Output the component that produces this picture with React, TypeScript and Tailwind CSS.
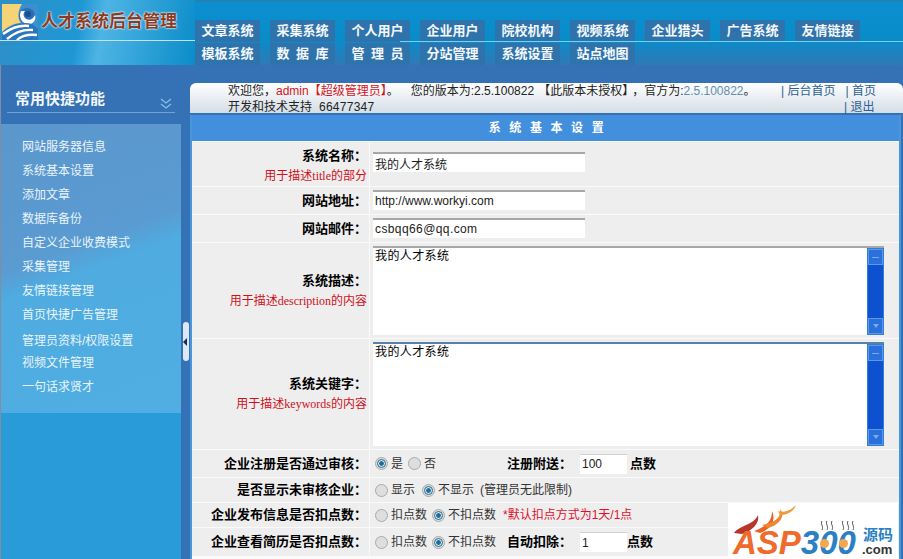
import React from 'react';

const CJK = 'font-["Liberation_Sans","Noto_Sans_CJK_SC",sans-serif]';

const TOP_MENU = [
  '文章系统', '采集系统', '个人用户', '企业用户', '院校机构', '视频系统', '企业猎头', '广告系统', '友情链接',
  '模板系统', '数 据 库', '管 理 员', '分站管理', '系统设置', '站点地图',
];

const SIDE_MENU = [
  { name: '网站服务器信息', h: 'h-[24px]' },
  { name: '系统基本设置', h: 'h-[24px]' },
  { name: '添加文章', h: 'h-[24px]' },
  { name: '数据库备份', h: 'h-[24px]' },
  { name: '自定义企业收费模式', h: 'h-[24px]' },
  { name: '采集管理', h: 'h-[24px]' },
  { name: '友情链接管理', h: 'h-[24px]' },
  { name: '首页快捷广告管理', h: 'h-[26px]' },
  { name: '管理员资料/权限设置', h: 'h-[22px]' },
  { name: '视频文件管理', h: 'h-[24px]' },
  { name: '一句话求贤才', h: 'h-[24px]' },
];

function Logo() {
  return (
    <svg width="36" height="36" viewBox="0 0 36 36" className="block">
      <rect width="36" height="36" fill="#3c8fce" />
      <path d="M0 0H20C16 6 15 14 19 19C12 19 5 23 0 28Z" fill="#f5d477" />
      <circle cx="25" cy="12" r="8" fill="#2a6fb5" />
      <path d="M19 7C16 13 20 21 28 20C33 19 34 14 33 11C31 16 26 17 23 14C21 12 21 9 23 7Z" fill="#fff" />
      <circle cx="26" cy="10" r="3" fill="#17508f" />
      <path d="M0 29C8 21 20 17 30 20L36 25V36H0Z" fill="#2a76bc" />
      <path d="M1 30C9 24 18 21 27 22M5 35C12 29 20 25 31 26M15 36C19 32 25 30 35 31" fill="none" stroke="#fff" strokeWidth="2.4" />
    </svg>
  );
}

function Radio({ on }: { on?: boolean }) {
  return (
    <span className="inline-flex h-[13px] w-[13px] shrink-0 items-center justify-center rounded-full border border-[#a9a9a9] bg-[#dedede]">
      {on && <span className="h-[7px] w-[7px] rounded-full border border-white bg-[#1f6e96] outline-1 outline-[#1f6e96]" />}
    </span>
  );
}

function Choice({ on, text, className }: { on?: boolean; text: string; className: string }) {
  return (
    <span className={`flex items-center gap-[3px] ${className}`}>
      <Radio on={on} />
      <span>{text}</span>
    </span>
  );
}

function Row({ height, label, hint, labelClass, children }: { height: string; label: string; hint?: React.ReactNode; labelClass?: string; children: React.ReactNode }) {
  return (
    <div className={`grid grid-cols-[177px_1fr] gap-x-px ${height}`}>
      <div className={`flex flex-col items-end justify-center bg-[#eeeeee] pr-[2px] ${labelClass ?? ''}`}>
        <div className="text-[13px] leading-[18px] font-bold text-black">{label}</div>
        {hint && <div className="mt-[2px] text-[12px] leading-[18px] text-[#d0101c]">{hint}</div>}
      </div>
      <div className="flex items-center bg-[#eeeeee] text-[12px] text-[#333]">{children}</div>
    </div>
  );
}

function TextField({ value, className }: { value: string; className: string }) {
  return (
    <input
      readOnly
      value={value}
      className={`h-[20px] bg-white pl-[2px] text-[12px] text-[#222] outline-none ${className}`}
    />
  );
}

function ScrollArea({ height, topBorder }: { height: string; topBorder: string }) {
  return (
    <div className={`ml-[3px] flex w-[511px] border-t-2 bg-white ${height} ${topBorder}`}>
      <textarea
        readOnly
        value="我的人才系统"
        className="min-w-0 flex-1 resize-none bg-white pl-[2px] text-[12px] leading-[16px] tracking-[0.4px] text-black outline-none"
      />
      <div className="flex w-[17px] flex-col justify-between border border-[#2f7fd6] bg-[#0d50d0]">
        <div className="flex h-[16px] items-center justify-center border border-[#5f97e4] bg-[#2a70dc]">
          <span className="h-px w-[7px] bg-[#7fa9e6]" />
        </div>
        <div className="flex h-[16px] items-center justify-center border border-[#5f97e4] bg-[#2a70dc]">
          <span className="h-0 w-0 border-x-[3px] border-t-[4px] border-x-transparent border-t-[#7fa9e6]" />
        </div>
      </div>
    </div>
  );
}

function Watermark() {
  return (
    <div className="absolute bottom-0 left-[728px] h-[56px] w-[170px] overflow-hidden bg-white">
      <svg width="70" height="32" viewBox="0 0 70 32" className="absolute left-[4px] top-0">
        <path d="M2 30C8 22 22 22 26 12C28 20 20 28 10 31Z" fill="#b8352a" />
        <path d="M22 28C32 24 40 20 40 8C44 16 40 26 28 30Z" fill="#e8632a" />
        <path d="M30 22C40 20 50 16 48 6C54 12 48 22 36 25Z" fill="#f0862f" />
        <path d="M46 8C52 10 58 8 64 2C62 8 56 12 48 12Z" fill="#f09a3c" />
      </svg>
      <svg width="44" height="12" viewBox="0 0 44 12" fill="none" stroke="#555" strokeWidth="1" className="absolute left-[90px] top-[17px]">
        <path d="M4 1C2 4 6 6 4 10M9 1C7 4 11 6 9 10M14 1C12 4 16 6 14 10M25 1C23 4 27 6 25 10M30 1C28 4 32 6 30 10M35 1C33 4 37 6 35 10" />
      </svg>
      <div className="absolute left-[5px] top-[24px] font-['Liberation_Sans',sans-serif] text-[33px] leading-[31px] font-bold italic whitespace-nowrap">
        <span className="text-[#ef6a2b]">ASP</span>
        <span className="text-[#2b7fc4]">300</span>
      </div>
      <span className="absolute left-[92px] top-[36px] h-[9px] w-[9px] rounded-full bg-[#f2a850]" />
      <span className="absolute left-[111px] top-[36px] h-[9px] w-[9px] rounded-full bg-[#f2a850]" />
      <div className="absolute left-[135px] top-[24px] text-[15px] leading-[16px] font-bold text-[#2b7fc4]">源码</div>
      <div className="absolute left-[134px] top-[40px] font-['Liberation_Sans',sans-serif] text-[13px] leading-[14px] font-bold text-[#333]">.com</div>
    </div>
  );
}

export default function App() {
  return (
    <div className={`relative flex h-[559px] w-[903px] flex-col overflow-hidden bg-[#3472b5] ${CJK}`}>
      {/* Header */}
      <div className="flex h-[65px] shrink-0 bg-[linear-gradient(180deg,#2a7fa8_0px,#0b8fd0_3px,#0a8cc9_40px,#3078b6_65px)]">
        <div className="flex h-[65px] w-[195px] shrink-0 flex-col bg-[linear-gradient(100deg,#2f8fc8_0%,#1f97d4_40%,#4eb4e4_52%,#0a8cc9_100%)]">
          <div className="flex h-[41px] items-center gap-[3px] border-b border-[#bfe6f7] pt-[3px] pl-[2px]">
            <Logo />
            <span className="text-[17px] leading-[22px] font-bold whitespace-nowrap text-[#8a3b25] [text-shadow:0_0_2px_#fff,0_0_2px_#fff]">人才系统后台管理</span>
          </div>
        </div>
        <div className="relative">
          <div className="grid grid-cols-[repeat(9,65px)] gap-x-[10px] gap-y-[1px] pt-[20px]">
            {TOP_MENU.map(name => (
              <div
                key={name}
                className="flex h-[22px] items-center justify-center whitespace-pre bg-[#2f73ad] text-[13px] font-bold text-[#f4f8fb] [word-spacing:3px]"
              >
                {name}
              </div>
            ))}
          </div>
          <div className="absolute left-[205px] top-[41px] h-px w-[503px] bg-[#6fd4f2]" />
        </div>
      </div>

      <div className="flex min-h-0 flex-1">
        {/* Sidebar */}
        <div className="flex w-[181px] shrink-0 flex-col border-l border-[#7f8f9f]">
          <div className="mx-[6px] mt-[17px] flex h-[31px] justify-between border-b border-[#6fa3d6] pr-[3px] pl-[8px]">
            <span className="text-[15px] leading-[34px] font-bold text-[#f2f7fb]">常用快捷功能</span>
            <svg width="12" height="12" viewBox="0 0 12 12" fill="none" stroke="#8fc0ea" strokeWidth="1.2" className="mt-[15px]">
              <path d="M1 2L6 6L11 2M1 7L6 11L11 7" />
            </svg>
          </div>
          <div className="mt-[11px] flex h-[289px] flex-col bg-[linear-gradient(160deg,#5b97cd_0%,#5a9bd1_42%,#4fabe0_50%,#50aee2_100%)] pt-[11px] pl-[21px]">
            {SIDE_MENU.map(item => (
              <div key={item.name} className={`${item.h} text-[12px] leading-[24px] text-[#eaf4fb]`}>{item.name}</div>
            ))}
          </div>
          <div className="flex-1 bg-[#2a9bd9]" />
        </div>

        {/* Splitter */}
        <div className="relative w-[9px] shrink-0">
          <div className="absolute top-[257px] left-[2px] flex h-[39px] w-[6px] items-center rounded-[3px] bg-[#dce9f5]">
            <span className="h-0 w-0 border-y-[4px] border-r-[4px] border-y-transparent border-r-[#14305e]" />
          </div>
        </div>

        {/* Main */}
        <div className="flex min-w-0 flex-1 flex-col pt-[18px]">
          <div className="flex h-[30px] shrink-0 rounded-t-[6px] bg-[linear-gradient(180deg,#ffffff,#d5dde6)] pl-[38px] text-[12px] leading-[16px] text-[#222]">
            <div className="w-[553px]">
              <div className="whitespace-pre">
                欢迎您，<span className="text-[#d4141c]">admin【超级管理员】</span>。<span className="ml-[12px]">您的版本为:2.5.100822</span><span className="px-[4px]">【此版本未授权】</span>，官方为:<span className="text-[#5f8fb0]">2.5.100822</span>。
              </div>
              <div>开发和技术支持<span className="ml-[7px] tracking-[0.25px]">66477347</span></div>
            </div>
            <div className="text-[#2b5f95]">
              <div className="whitespace-pre">| 后台首页   | 首页</div>
              <div className="whitespace-pre pl-[63px]">| 退出</div>
            </div>
          </div>

          <div className="mt-[2px] mr-[2px] flex flex-1 flex-col gap-y-px border-x-2 border-[#4a96dc] bg-[#fafafa]">
            <div className="flex h-[26px] shrink-0 items-center justify-center bg-[#4290dd] pl-[10px] text-[12px] font-bold tracking-[8.6px] text-white">系统基本设置</div>

            <Row height="h-[44px]" label="系统名称：" labelClass="pt-[4px]" hint={<>用于描述<span className="font-['Liberation_Serif',serif]">title</span>的部分</>}>
              <div className="mb-[2px] ml-[3px]"><TextField value="我的人才系统" className="w-[212px] border-t-2 border-t-[#a8a8a8]" /></div>
            </Row>
            <Row height="h-[27px]" label="网站地址：">
              <div className="mb-[2px] ml-[3px]"><TextField value="http://www.workyi.com" className="w-[212px] border-t-2 border-t-[#a8a8a8]" /></div>
            </Row>
            <Row height="h-[27px]" label="网站邮件：">
              <div className="mb-[2px] ml-[3px]"><TextField value="csbqq66@qq.com" className="w-[212px] border-t-2 border-t-[#a8a8a8] tracking-[0.4px]" /></div>
            </Row>
            <Row height="h-[95px]" label="系统描述：" hint={<>用于描述<span className="font-['Liberation_Serif',serif]">description</span>的内容</>}>
              <ScrollArea height="h-[89px]" topBorder="border-t-[#a8a8a8]" />
            </Row>
            <Row height="h-[110px]" label="系统关键字：" hint={<>用于描述<span className="font-['Liberation_Serif',serif]">keywords</span>的内容</>}>
              <ScrollArea height="h-[104px]" topBorder="border-t-[#5a7fa8]" />
            </Row>
            <Row height="h-[27px]" label="企业注册是否通过审核：">
              <Choice on text="是" className="ml-[5px] w-[33px]" />
              <Choice text="否" className="w-[99px]" />
              <span className="w-[73px] text-[13px] font-bold text-black">注册附送：</span>
              <TextField value="100" className="w-[47px] border-t border-t-[#d0d0d0]" />
              <span className="ml-[3px] text-[13px] font-bold text-black">点数</span>
            </Row>
            <Row height="h-[24px]" label="是否显示未审核企业：">
              <Choice text="显示" className="ml-[5px] w-[47px]" />
              <Choice on text="不显示" className="w-[58px]" />
              <span>(管理员无此限制)</span>
            </Row>
            <Row height="h-[24px]" label="企业发布信息是否扣点数：">
              <Choice text="扣点数" className="ml-[5px] w-[57px]" />
              <Choice on text="不扣点数" className="w-[71px]" />
              <span className="text-[#e0102c]">*默认扣点方式为1天/1点</span>
            </Row>
            <Row height="h-[28px]" label="企业查看简历是否扣点数：">
              <Choice text="扣点数" className="ml-[5px] w-[57px]" />
              <Choice on text="不扣点数" className="w-[75px]" />
              <span className="w-[73px] text-[13px] font-bold text-black">自动扣除：</span>
              <TextField value="1" className="w-[47px] border-t border-t-[#d0d0d0]" />
              <span className="text-[13px] font-bold text-black">点数</span>
            </Row>
          </div>
        </div>
      </div>

      <Watermark />
    </div>
  );
}
